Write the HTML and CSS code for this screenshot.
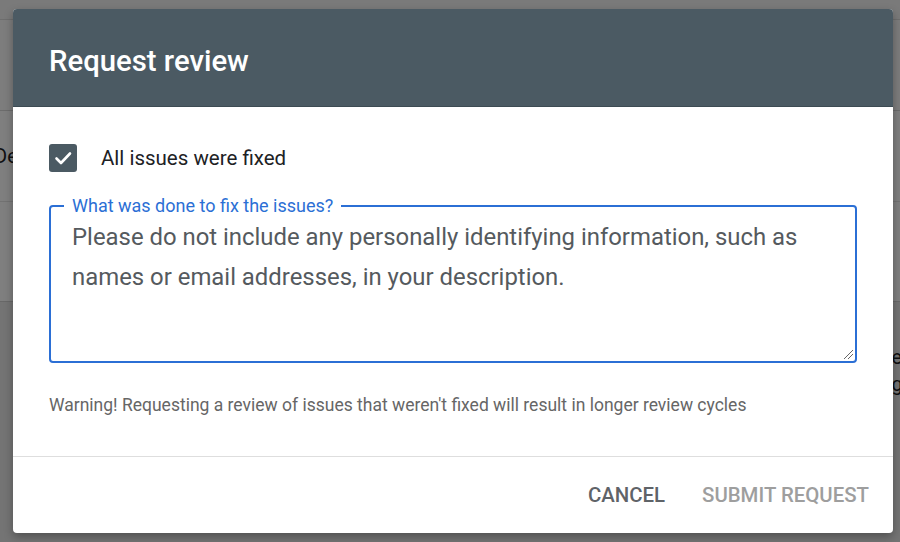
FILE: index.html
```html
<!DOCTYPE html>
<html lang="en">
<head>
<meta charset="utf-8">
<title>Request review</title>
<link rel="stylesheet" href="styles.css">
</head>
<body>
<div class="page">
  <div class="page-top"></div>
  <div class="page-bar"></div>
  <div class="page-row"><span class="row-left">De</span></div>
  <div class="page-row page-row-3"></div>
  <div class="page-row page-row-text"><span class="row-right">e,<br>g</span></div>
</div>
<div class="scrim"></div>
<div class="dialog" role="dialog" aria-labelledby="dlg-title">
  <div class="dialog-header">
    <h1 id="dlg-title" class="dialog-title">Request review</h1>
  </div>
  <div class="dialog-body">
    <label class="check-row">
      <span class="checkbox">
        <svg width="28" height="28" viewBox="0 0 28 28"><path d="M7.5 14.5l4.5 4.5 9-9.5" fill="none" stroke="#fff" stroke-width="2.6" stroke-linecap="round" stroke-linejoin="round"/></svg>
      </span>
      <span class="check-label">All issues were fixed</span>
    </label>
    <div class="field">
      <span class="field-label">What was done to fix the issues?</span>
      <div class="field-text">Please do not include any personally identifying information, such as names or email addresses, in your description.</div>
      <svg class="resize" width="12" height="12" viewBox="0 0 12 12"><path d="M2 11L11 2M6 11L11 6" stroke="#666" stroke-width="1"/></svg>
    </div>
    <p class="warning">Warning! Requesting a review of issues that weren't fixed will result in longer review cycles</p>
  </div>
  <div class="dialog-footer">
    <button class="btn btn-cancel">CANCEL</button>
    <button class="btn btn-submit" disabled>SUBMIT REQUEST</button>
  </div>
</div>
</body>
</html>
```
FILE: styles.css
```css
html, body {
  margin: 0;
  padding: 0;
}
body {
  width: 900px;
  height: 542px;
  overflow: hidden;
  position: relative;
  font-family: Roboto, "Noto Sans", "Liberation Sans", sans-serif;
  background: #ffffff;
}
.page {
  display: flex;
  flex-direction: column;
  height: 542px;
  background: #ffffff;
}
.page-top {
  height: 19px;
  background: #f4f4f4;
  border-bottom: 1px solid #dddddd;
}
.page-bar {
  height: 90px;
  background: #fbfbfb;
  border-bottom: 1px solid #d8d8d8;
}
.page-row {
  height: 90px;
  border-bottom: 1px solid #e4e4e4;
  position: relative;
  font-size: 20px;
  color: #202124;
  display: flex;
  align-items: center;
}
.page-row-3 {
  height: 99px;
  border-bottom: 1px solid #d0d0d0;
}
.page-row-text {
  flex: 1;
  border-bottom: none;
  background: #e8e8e8;
  align-items: flex-start;
}
.row-left {
  margin-left: -6px;
}
.row-right {
  margin-left: auto;
  margin-right: -6px;
  line-height: 27px;
  margin-top: 42px;
}
.scrim {
  position: absolute;
  inset: 0;
  background: rgba(0, 0, 0, 0.5);
}
.dialog {
  position: absolute;
  left: 13px;
  top: 9px;
  width: 880px;
  height: 524px;
  background: #ffffff;
  border-radius: 4px;
  overflow: hidden;
  display: flex;
  flex-direction: column;
  box-shadow: 0 4px 10px rgba(0, 0, 0, 0.3);
}
.dialog-header {
  background: #4b5a63;
  border-bottom: 1px solid #3d4b53;
  display: flex;
  align-items: center;
  padding: 6px 36px 0;
  box-sizing: border-box;
  height: 98px;
}
.dialog-title {
  margin: 0;
  color: #ffffff;
  font-size: 29.3px;
  font-weight: 500;
  letter-spacing: 0;
}
.dialog-body {
  height: 349px;
  box-sizing: border-box;
  padding: 37px 36px 0;
  display: flex;
  flex-direction: column;
}
.check-row {
  display: flex;
  align-items: center;
  height: 28px;
  gap: 24px;
}
.checkbox {
  width: 28px;
  height: 28px;
  background: #4b5a63;
  border-radius: 3px;
  display: block;
}
.checkbox svg {
  display: block;
}
.check-label {
  font-size: 20.5px;
  color: #202124;
}
.field {
  margin-top: 33px;
  height: 158px;
  box-sizing: border-box;
  border: 2px solid #2b6fd5;
  border-radius: 4px;
  position: relative;
  padding: 10px 21px 0;
}
.field-label {
  position: absolute;
  top: -12px;
  left: 13px;
  padding: 0 8px;
  background: #ffffff;
  color: #2b6fd5;
  font-size: 18px;
  line-height: 22px;
}
.field-text {
  font-size: 23.9px;
  line-height: 40px;
  color: #555a5e;
}
.resize {
  position: absolute;
  right: 1px;
  bottom: 1px;
}
.warning {
  margin: 32px 0 0;
  font-size: 17.5px;
  line-height: 20px;
  color: #666666;
}
.dialog-footer {
  border-top: 1px solid #dedede;
  height: 77px;
  box-sizing: border-box;
  display: flex;
  align-items: center;
  justify-content: flex-end;
  gap: 37px;
  padding: 0 24px 0 0;
}
.btn {
  background: none;
  border: none;
  padding: 0;
  font-family: inherit;
  font-size: 20.4px;
  font-weight: 500;
  letter-spacing: 0;
  cursor: pointer;
}
.btn-cancel {
  color: #5f6368;
}
.btn-submit {
  color: #9e9e9e;
}
```
